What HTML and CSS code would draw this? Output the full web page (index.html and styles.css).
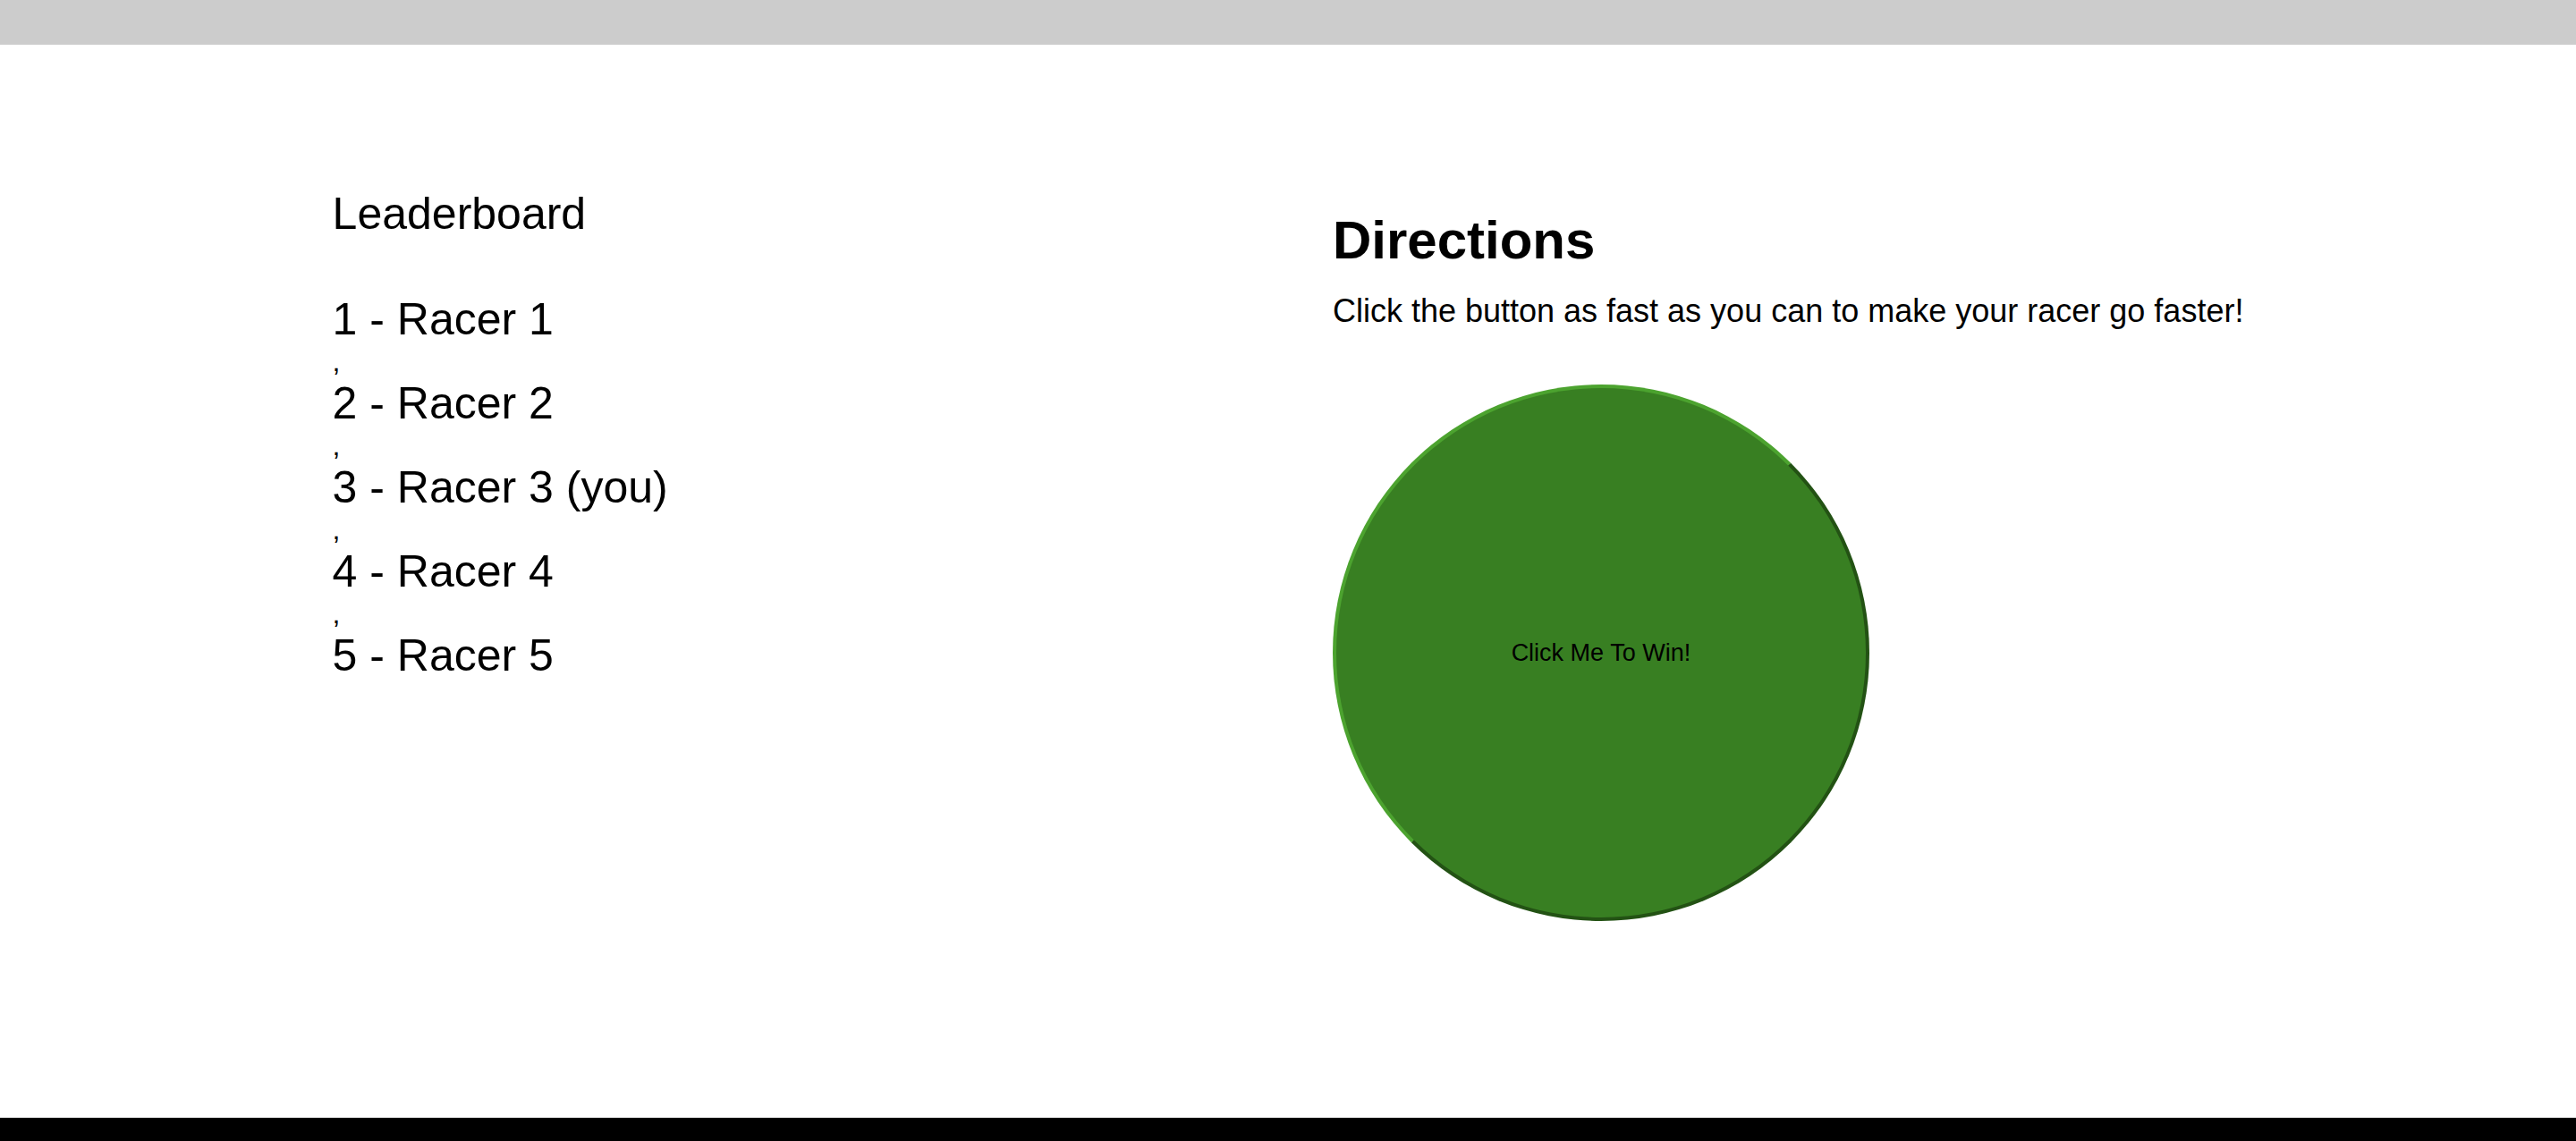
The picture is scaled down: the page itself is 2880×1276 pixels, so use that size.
FILE: index.html
```html
<!DOCTYPE html>
<html lang="en">
<head>
  <meta charset="utf-8">
  <title>Racer</title>
  <link rel="stylesheet" href="styles.css">
</head>
<body>
  <div class="track"></div>
  <main class="game">
    <section class="leaderboard">
      <p class="title">Leaderboard</p>
      <div class="standings">
        <p class="racer">1 - Racer 1</p>,
        <p class="racer">2 - Racer 2</p>,
        <p class="racer">3 - Racer 3 (you)</p>,
        <p class="racer">4 - Racer 4</p>,
        <p class="racer">5 - Racer 5</p>
      </div>
    </section>
    <section class="directions">
      <h1 class="heading">Directions</h1>
      <p class="text">Click the button as fast as you can to make your racer go faster!</p>
      <button class="clicker" type="button">Click Me To Win!</button>
    </section>
  </main>
  <footer class="footer"></footer>
</body>
</html>
```
FILE: styles.css
```css
body {
  margin: 0;
  min-height: 100vh;
  display: flex;
  flex-direction: column;
  background: #fff;
  color: #000;
  font-family: "Liberation Sans", Arial, sans-serif;
  font-size: 32px;
}

.track {
  height: 50px;
  background: #ccc;
}

.game {
  flex: 1;
  display: flex;
  justify-content: space-around;
  align-items: flex-start;
}

.leaderboard {
  padding-top: 160px;
}

.title,
.racer {
  margin: 0;
  font-size: 50px;
  line-height: 58px;
}

.standings {
  margin-top: 60px;
  line-height: 36px;
}

.directions {
  padding-top: 184px;
}

.heading {
  margin: 0;
  font-size: 60px;
  line-height: 70px;
}

.text {
  margin: 22px 0 60px;
  font-size: 36px;
  line-height: 44px;
}

.clicker {
  width: 600px;
  height: 600px;
  padding: 0;
  border: 4px solid;
  border-color: #4ca32f #235214 #235214 #4ca32f;
  border-radius: 50%;
  background: #387f22;
  color: #000;
  font-family: inherit;
  font-size: 27px;
}

.footer {
  height: 26px;
  background: #000;
}
```
